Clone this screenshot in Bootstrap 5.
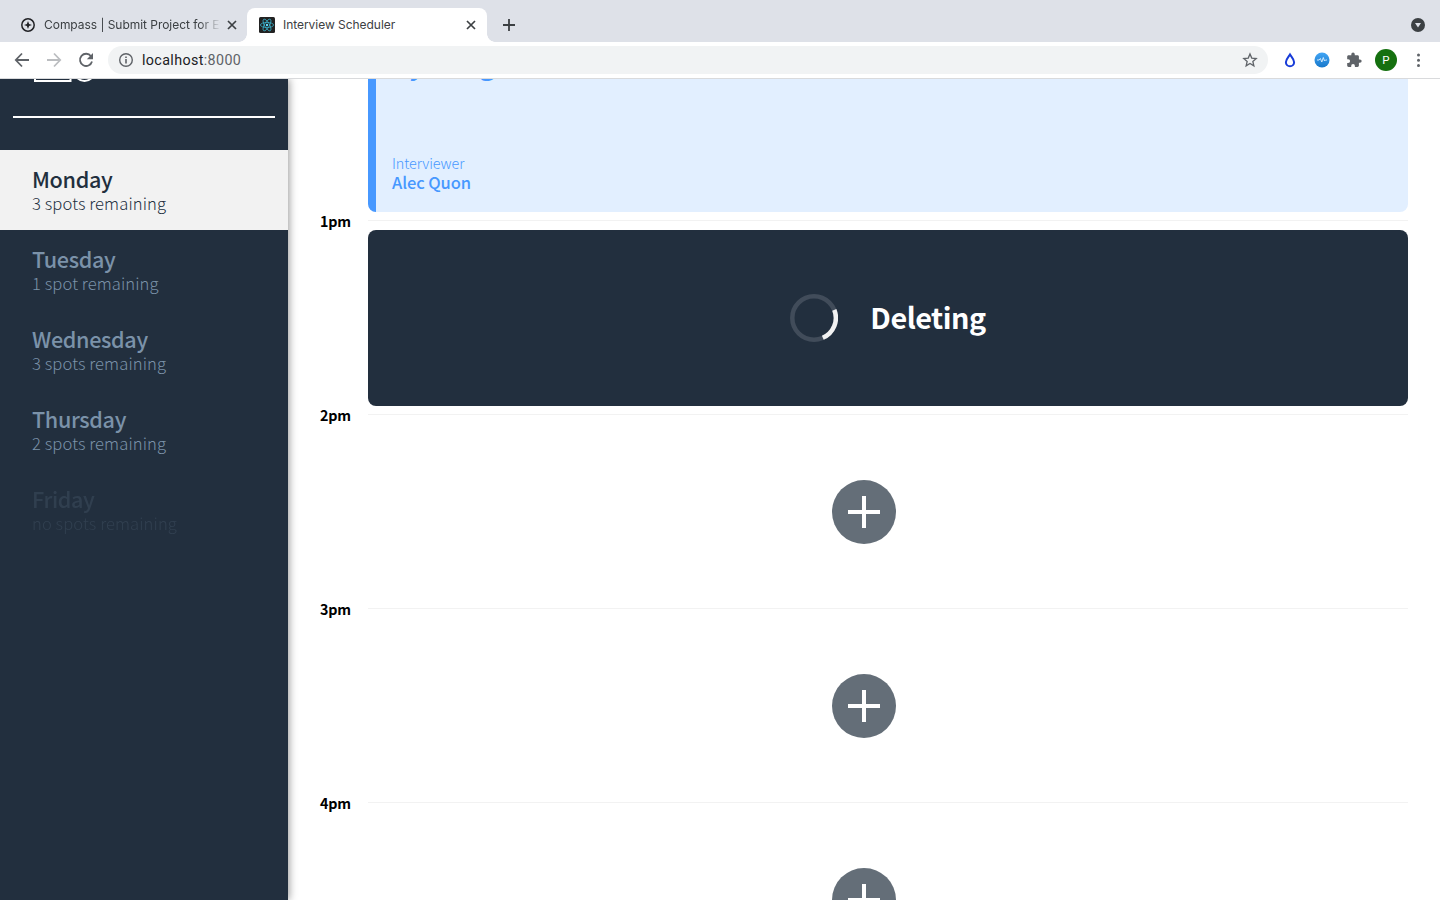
<!DOCTYPE html>
<html lang="en">
<head>
<meta charset="utf-8">
<title>Interview Scheduler</title>
<link href="https://cdn.jsdelivr.net/npm/bootstrap@5.3.0/dist/css/bootstrap.min.css" rel="stylesheet">
<script src="https://cdn.jsdelivr.net/npm/bootstrap@5.3.0/dist/js/bootstrap.bundle.min.js"></script>
<style>
body{width:1440px;height:900px;overflow:hidden;background:#fff;color:#000;font-family:"Noto Sans CJK SC",sans-serif}
svg{display:block;flex:none}
.tabstrip{height:42px;background:#dee1e8;font:12px/16px Inter,sans-serif;color:#3c4043}
.tab-idle{width:247px;padding:17px 7px 9px 20px}
.tab-idle .tab-title{width:176px;margin-left:8px;-webkit-mask-image:linear-gradient(90deg,#000 155px,transparent 177px)}
.tab-title{white-space:nowrap;overflow:hidden;letter-spacing:-.04px}
.tab-live{width:240px;height:34px;margin-top:8px;padding:9px 10px 9px 12px;background:#fff;border-radius:8px 8px 0 0;position:relative}
.tab-live::before,.tab-live::after{content:"";position:absolute;bottom:0;width:8px;height:8px}
.tab-live::before{left:-8px;background:radial-gradient(circle at 0 0,transparent 7.5px,#fff 8px)}
.tab-live::after{right:-8px;background:radial-gradient(circle at 100% 0,transparent 7.5px,#fff 8px)}
.toolbar{height:37px;background:#fff;border-bottom:1px solid #d9dadc}
.omnibox{width:1160px;height:28px;border-radius:14px;background:#f1f3f4;font:14px/20px Roboto,sans-serif;color:#202124;padding:0 10px}
.url{font-size:14.3px;letter-spacing:.37px}
.url-port{color:#5f6368}
.strip-menu{margin-right:15px}
.avatar{width:22px;height:22px;background:#15700f;color:#fff;font:400 11.5px/23px Roboto,sans-serif}
.page{height:821px;overflow:hidden}
.side{width:288px;height:821px;background:#222f3e;box-shadow:1px 0 8px rgba(0,0,0,.42);z-index:1;position:relative}
.side-rule{height:2px;margin:34px 13px 32px;background:#fff}
.day{height:80px;padding:17px 32px 15px;color:#7b92a9}
.day.selected{background:#f2f2f2;color:#222f3e}
.day.full{opacity:.16}
.day-name{font-size:21.6px;line-height:24px;font-weight:500;letter-spacing:-.35px}
.day-spots{font-size:16.6px;line-height:24px;font-weight:300;letter-spacing:.09px}
.schedule{padding:0 32px}
.slot-head{height:18px}
.hour{width:48px;font-size:14.3px;line-height:18px;font-weight:700;letter-spacing:-.15px}
.hour-line{height:1px;background:#f2f2f2;margin-top:8px}
.slot-body{height:176px}
.booked{margin-left:48px;height:133px;background:#e2efff;border-left:8px solid #4798ff;border-radius:0 0 8px 8px;color:#4798ff;padding:0 16px 20px;overflow:hidden}
.student{font-size:28.8px;line-height:32px;font-weight:500;margin-top:-33px}
.role{font-size:14.4px;line-height:20px;font-weight:300;letter-spacing:-.1px}
.person{font-size:16.5px;line-height:19px;font-weight:500;letter-spacing:-.1px}
.status{margin-left:48px;background:#222f3e;border-radius:8px;color:#fff;gap:32px}
.status-text{font-size:28.8px;line-height:32px;font-weight:700;letter-spacing:-.5px;padding-bottom:2px}
</style>
</head>
<body>
<header>
 <div class="tabstrip d-flex">
  <div class="tab-idle d-flex align-items-center">
   <svg width="16" height="16" viewBox="0 0 16 16" fill="none" stroke="#202124"><circle cx="8" cy="8" r="6.2" stroke-width="1.5"/><path d="M8 4l1.1 2.9L12 8 9.100 9.100 8 12 6.900 9.100 4 8l2.900-1.100z" fill="#202124" stroke="none"/></svg>
   <div class="tab-title">Compass | Submit Project for Evaluation</div>
   <svg class="ms-1" width="16" height="16" viewBox="0 0 16 16" stroke="#3c4043" stroke-width="1.7"><path d="M4 4l8 8M12 4l-8 8"/></svg>
  </div>
  <div class="tab-live d-flex align-items-center">
   <svg width="16" height="16" viewBox="0 0 16 16" fill="none" stroke="#39b5cf" stroke-width=".75"><rect width="16" height="16" rx="1.500" fill="#222" stroke="none"/><ellipse cx="8" cy="8" rx="6.600" ry="2.500"/><ellipse cx="8" cy="8" rx="6.600" ry="2.500" transform="rotate(60 8 8)"/><ellipse cx="8" cy="8" rx="6.600" ry="2.500" transform="rotate(120 8 8)"/><circle cx="8" cy="8" r="1.200" fill="#61dafb" stroke="none"/></svg>
   <div class="tab-title flex-grow-1 ms-2">Interview Scheduler</div>
   <svg width="12" height="12" viewBox="0 0 12 12" stroke="#3c4043" stroke-width="1.700"><path d="M2 2l8 8M10 2l-8 8"/></svg>
  </div>
  <svg class="ms-3 align-self-center mt-2" width="12" height="12" viewBox="0 0 12 12" stroke="#3c4043" stroke-width="1.800"><path d="M6 0v12M0 6h12"/></svg>
  <svg class="strip-menu ms-auto align-self-center mt-2" width="14" height="14" viewBox="0 0 14 14"><circle cx="7" cy="7" r="7" fill="#3c4043"/><path d="M4 5h6l-3 4.500z" fill="#dee1e8"/></svg>
 </div>
 <div class="toolbar d-flex align-items-center">
  <svg width="108" height="36" viewBox="0 0 108 36" fill="none" stroke="#5f6368" stroke-width="1.800"><path d="M29 18H16M22 11.500L15.800 18l6.200 6.500"/><path d="M47 18h13M54 11.500l6.200 6.500-6.200 6.500" stroke="#bbbdc0"/><path d="M91 14.200A6.100 6.100 0 1 0 92 19.500"/><path d="M93 11v6.200h-6.200z" fill="#5f6368" stroke="none"/></svg>
  <div class="omnibox d-flex align-items-center">
   <svg width="16" height="16" viewBox="0 0 16 16"><circle cx="8" cy="8" r="6.300" fill="none" stroke="#5f6368" stroke-width="1.400"/><path d="M7.200 7h1.600v4.500H7.200zM7.200 4.500h1.600v1.600H7.200z" fill="#5f6368"/></svg>
   <div class="ms-2 url">localhost<span class="url-port">:8000</span></div>
   <svg class="ms-auto" width="16" height="16" viewBox="0 0 16 16" fill="none" stroke="#5f6368" stroke-width="1.300"><path d="M8 2l1.750 4.100 4.450.4-3.350 2.950 1 4.350L8 11.500l-3.850 2.300 1-4.350L1.800 6.500l4.450-.4z"/></svg>
  </div>
  <svg width="107" height="36" viewBox="0 0 107 36"><defs><linearGradient id="pulse" x2="0" y2="1"><stop stop-color="#42a5f5"/><stop offset="1" stop-color="#1878ca"/></linearGradient></defs><path d="M22 12.500c-1.500 2.500-4.100 4.900-4.100 7.700a4.100 4.100 0 0 0 8.200 0c0-2.800-2.600-5.200-4.100-7.700z" fill="none" stroke="#173bd8" stroke-width="2"/><circle cx="54" cy="18" r="7.500" fill="url(#pulse)"/><path d="M49 18h2l1.400-1.500 1.400 3.500 1.500-4.500 1.200 3.500 1-1H59" fill="none" stroke="#dff1ff" stroke-width=".9"/><g transform="translate(77.800 9.800) scale(.69)"><path fill="#5f6368" d="M20.500 11H19V7c0-1.100-.9-2-2-2h-4V3.500a2.500 2.500 0 0 0-5 0V5H4c-1.100 0-2 .9-2 2v3.800h1.500a2.700 2.700 0 0 1 0 5.400H2V20c0 1.100.9 2 2 2h3.800v-1.500a2.700 2.700 0 0 1 5.400 0V22H17c1.100 0 2-.9 2-2v-4h1.500a2.500 2.500 0 0 0 0-5z"/></g></svg>
  <div class="avatar rounded-circle text-center">P</div>
  <svg class="ms-auto" width="43" height="36" viewBox="0 0 43 36" fill="#5f6368"><circle cx="21.500" cy="13" r="1.500"/><circle cx="21.500" cy="18.200" r="1.500"/><circle cx="21.500" cy="23.400" r="1.500"/></svg>
 </div>
</header>
<div class="page d-flex">
 <nav class="side flex-shrink-0">
  <svg width="288" height="3" viewBox="0 0 288 3" fill="none" stroke="#fff"><path d="M35-9V2h35.500V-9" stroke-width="2"/><circle cx="84.500" cy="-8" r="10" stroke-width="2"/></svg>
  <div class="side-rule"></div>
  <div class="day selected"><div class="day-name">Monday</div><div class="day-spots">3 spots remaining</div></div>
  <div class="day"><div class="day-name">Tuesday</div><div class="day-spots">1 spot remaining</div></div>
  <div class="day"><div class="day-name">Wednesday</div><div class="day-spots">3 spots remaining</div></div>
  <div class="day"><div class="day-name">Thursday</div><div class="day-spots">2 spots remaining</div></div>
  <div class="day full"><div class="day-name">Friday</div><div class="day-spots">no spots remaining</div></div>
 </nav>
 <main class="schedule flex-grow-1">
  <article class="booked d-flex flex-column">
   <div class="student">Ayming</div>
   <div class="interviewer mt-auto"><div class="role">Interviewer</div><div class="person">Alec Quon</div></div>
  </article>
  <section>
   <div class="slot-head d-flex"><div class="hour">1pm</div><div class="hour-line flex-grow-1"></div></div>
   <div class="slot-body status d-flex align-items-center justify-content-center">
    <svg width="48" height="48" viewBox="0 0 48 48" fill="none" stroke-width="4.500"><circle cx="24" cy="24" r="21.700" stroke="#414c5a"/><path d="M44.300 15.800A21.700 21.700 0 0 1 32.800 43.800" stroke="#f2f2f2"/></svg>
    <div class="status-text">Deleting</div>
   </div>
  </section>
  <section>
   <div class="slot-head d-flex"><div class="hour">2pm</div><div class="hour-line flex-grow-1"></div></div>
   <div class="slot-body d-flex align-items-center justify-content-center"><svg width="64" height="64" viewBox="0 0 64 64"><circle cx="32" cy="32" r="32" fill="#646e78"/><path d="M32 16v32M16 32h32" stroke="#fff" stroke-width="4"/></svg></div>
  </section>
  <section>
   <div class="slot-head d-flex"><div class="hour">3pm</div><div class="hour-line flex-grow-1"></div></div>
   <div class="slot-body d-flex align-items-center justify-content-center"><svg width="64" height="64" viewBox="0 0 64 64"><circle cx="32" cy="32" r="32" fill="#646e78"/><path d="M32 16v32M16 32h32" stroke="#fff" stroke-width="4"/></svg></div>
  </section>
  <section>
   <div class="slot-head d-flex"><div class="hour">4pm</div><div class="hour-line flex-grow-1"></div></div>
   <div class="slot-body d-flex align-items-center justify-content-center"><svg width="64" height="64" viewBox="0 0 64 64"><circle cx="32" cy="32" r="32" fill="#646e78"/><path d="M32 16v32M16 32h32" stroke="#fff" stroke-width="4"/></svg></div>
  </section>
 </main>
</div>
</body>
</html>
